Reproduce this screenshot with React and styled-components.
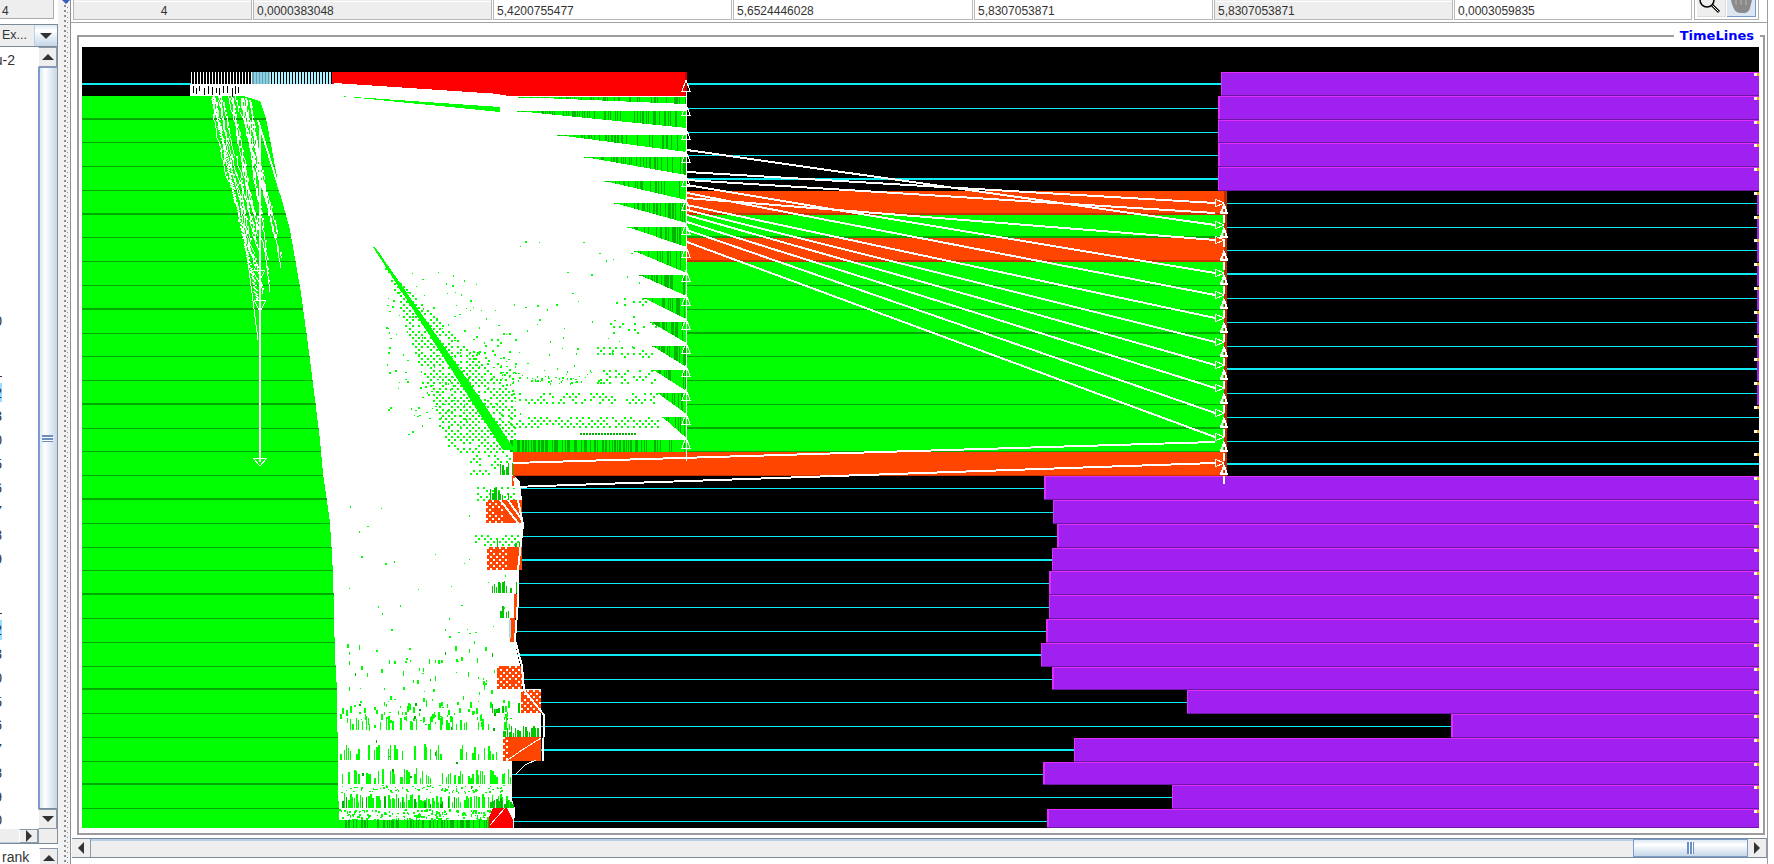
import React from 'react';
import styled, { createGlobalStyle, css } from 'styled-components';

const GlobalStyle = createGlobalStyle`
  html, body {
    margin: 0;
    padding: 0;
    background: #fff;
    overflow: hidden;
  }
  #root {
    width: 1774px;
    height: 864px;
  }
`;

// ---------- chart data ----------

const GREEN = '#00ff00';
const DARK_GREEN = '#00a800';
const ORANGE = '#ff4500';
const PURPLE = '#a020f0';
const CYAN = '#10eaf4';

let seed = 71;
const rnd = () => {
  seed = (seed + 0x6d2b79f5) | 0;
  let t = Math.imul(seed ^ (seed >>> 15), 1 | seed);
  t = (t + Math.imul(t ^ (t >>> 7), 61 | t)) ^ t;
  return ((t ^ (t >>> 14)) >>> 0) / 4294967296;
};

const rowTop = (i) => Math.round(72 + 23.78 * i);
const rowMid = (i) => Math.round(84 + 23.78 * i);
const box = (x, y, w, h) => `M${x} ${y}h${w}v${h}h${-w}z`;

const edge = [
  [205, 96], [243, 96], [260, 101], [266, 118], [272, 150], [280, 193], [290, 230], [301, 293],
  [310, 360], [320, 440], [323, 473], [330, 523], [333, 573], [335, 657], [337, 690], [338, 773], [339, 828],
];
const edgeAt = (y) => {
  for (let i = 1; i < edge.length; i++) {
    if (y <= edge[i][1]) {
      const [x0, y0] = edge[i - 1];
      const [x1, y1] = edge[i];
      return y1 === y0 ? x1 : Math.round(x0 + ((x1 - x0) * (y - y0)) / (y1 - y0));
    }
  }
  return 339;
};

const whiteArea = [
  [190, 84], [332, 84], [513, 96], [687, 96], [687, 452], [513, 452], [513, 475], [520, 482], [522, 500],
  [522, 547], [518, 570], [516, 600], [514, 640], [520, 665], [522, 689], [541, 689], [541, 761], [512, 761],
  [512, 800], [515, 808], [514, 828], [339, 828], [205, 96], [190, 96],
];
const greenArea = [[82, 96], ...edge, [82, 828]];
const pts = (list) => list.map((p) => p.join(',')).join(' ');

const checker = (x0, x1, y0, y1, step, p = 0.85, keep = () => true) => {
  let s = '';
  for (let y = y0, iy = 0; y < y1; y += step, iy++) {
    for (let x = x0, ix = 0; x < x1; x += step, ix++) {
      if ((ix + iy) % 2 === 0 && rnd() < p && keep(x, y)) s += box(x, y, 2, 2);
    }
  }
  return s;
};

const scatter = (n, x0, x1, y0, y1, maxH = 2) => {
  let s = '';
  for (let k = 0; k < n; k++) {
    const x = Math.round(x0 + rnd() * (x1 - x0));
    const y = Math.round(y0 + rnd() * (y1 - y0));
    s += box(x, y, 1 + Math.round(rnd()), 1 + Math.round(rnd() * (maxH - 1)));
  }
  return s;
};

const bars = (x0, x1, y0, y1, p) => {
  let s = '';
  for (let x = x0; x < x1; x += 2) {
    if (rnd() < p) {
      const h = Math.round((y1 - y0) * (0.35 + rnd() * 0.65));
      s += box(x, y1 - h, 1 + Math.round(rnd()), h);
    }
  }
  return s;
};

// [x of the wedge tip, top y, height at the right end]
const wedges = [
  [517, 111, 17], [518, 97, 7], [557, 135, 17], [584, 157, 18], [604, 181, 19], [614, 203, 20], [627, 227, 20],
  [634, 251, 22], [639, 275, 21], [644, 298, 21], [650, 322, 21], [652, 346, 21], [653, 370, 21], [657, 393, 21],
  [662, 417, 21],
];
let wedgeLight = '';
let wedgeDark = '';
wedges.forEach(([x0, top, h]) => {
  for (let x = x0; x < 686; x++) {
    const len = Math.max(1, Math.round(((x - x0) / (686 - x0)) * h));
    if (rnd() < 0.32) wedgeDark += box(x, top, 1, len);
    else wedgeLight += box(x, top, 1, len);
  }
});
for (let x = 510; x < 686; x++) {
  if (rnd() < 0.4) wedgeDark += box(x, 440, 1, 12);
  else wedgeLight += box(x, 440, 1, 12);
}

const diagonalAt = (y) => 373 + (y - 247) * 0.655;

let speckGreen = '';
speckGreen += checker(385, 515, 262, 452, 3, 0.85, (x, y) => {
  const d = diagonalAt(y);
  return x < d && x > d - (y - 262) * 0.3;
});
speckGreen += checker(385, 515, 262, 440, 3, 0.8, (x, y) => {
  const d = diagonalAt(y);
  return x > d && x < d + (y - 262) * 0.34;
});
speckGreen += checker(440, 520, 330, 440, 3, 0.22, (x, y) => x > diagonalAt(y) + (y - 262) * 0.34);
speckGreen += scatter(110, 385, 480, 270, 440);
speckGreen += scatter(60, 430, 520, 350, 420);
speckGreen += checker(510, 660, 417, 429, 3, 0.85);
speckGreen += checker(513, 560, 393, 405, 3, 0.55);
speckGreen += checker(560, 657, 393, 405, 3, 0.6);
speckGreen += scatter(60, 500, 600, 370, 384);
speckGreen += checker(597, 657, 370, 383, 3, 0.55);
speckGreen += checker(597, 657, 347, 358, 3, 0.5);
speckGreen += checker(610, 657, 323, 335, 3, 0.45);
speckGreen += checker(618, 647, 298, 312, 3, 0.25);
speckGreen += scatter(35, 480, 640, 300, 370);
speckGreen += scatter(14, 440, 650, 240, 300);
// lower field, it gets denser towards the bottom
speckGreen += scatter(30, 340, 510, 480, 640);
speckGreen += checker(470, 512, 455, 475, 3, 0.5);
speckGreen += checker(477, 515, 487, 500, 3, 0.65);
speckGreen += checker(475, 520, 535, 547, 3, 0.65);
speckGreen += scatter(60, 340, 510, 640, 700, 5);
speckGreen += scatter(90, 340, 510, 700, 725, 7);
speckGreen += bars(340, 510, 716, 730, 0.3);
speckGreen += bars(340, 510, 744, 760, 0.42);
speckGreen += bars(340, 512, 768, 784, 0.65);
speckGreen += scatter(90, 340, 510, 785, 792, 2);
speckGreen += bars(340, 512, 793, 808, 0.85);
speckGreen += scatter(160, 338, 490, 809, 820, 3);

let speckDark = '';
speckDark += scatter(20, 340, 510, 650, 790, 4);
speckDark += bars(340, 512, 796, 808, 0.2);
for (let x = 580; x < 637; x += 3) speckDark += box(x, 433, 2, 2);

const bottomStripe = (() => {
  let light = '';
  let dark = '';
  for (let x = 339; x < 489; x++) {
    if (rnd() < 0.4) dark += box(x, 820, 1, 8);
    else light += box(x, 820, 1, 8);
  }
  return { light, dark };
})();

const blocks = (() => {
  let dark = '';
  [[488, 515, 797, 808, 0.8], [500, 515, 606, 618, 0.8], [492, 517, 581, 593, 0.65], [503, 538, 725, 737, 0.9],
    [492, 520, 702, 713, 0.55], [490, 512, 487, 500, 0.7], [495, 520, 535, 547, 0.6], [500, 513, 463, 475, 0.7]]
    .forEach(([x0, x1, y0, y1, p]) => {
      dark += bars(x0, x1, y0, y1, p);
    });
  return dark;
})();

// wandering white strands over the green, the states of the first ranks
let bandWhite = '';
for (let k = 0; k < 16; k++) {
  let x = 212 + rnd() * 42;
  const stop = 170 + rnd() * 130;
  const slope = 0.14 + rnd() * 0.12;
  for (let y = 96; y < stop; y += 2) {
    x += slope * 2 + (rnd() - 0.5) * 1.4;
    const px = Math.round(x);
    if (px < edgeAt(y) - 4) bandWhite += box(px, y, rnd() < 0.3 ? 2 : 1, 2);
  }
}
for (let y = 120; y < 193; y++) {
  bandWhite += box(Math.round(257 + (y - 120) * 0.31), y, 2, 1);
}
for (let y = 96; y < 300; y++) {
  bandWhite += box(Math.round(212 + (y - 96) * 0.22 + (rnd() - 0.5) * 3), y, 2, 1);
}

let barcode = '';
let barcodeBlue = '';
for (let x = 191; x < 332; x += 3) {
  const blue = x > 251 && x < 270;
  if (blue) barcodeBlue += box(x, 72, 2, 12);
  else if (x > 270) barcodeBlue += box(x, 72, 1, 12) + box(x + 1, 72, 1, 12);
  else barcode += box(x, 72, 1, 12);
}
let ticks = '';
for (let x = 193; x < 240; x += 3 + Math.round(rnd() * 2)) {
  ticks += box(x, 86 + Math.round(rnd() * 2), 1, 5 + Math.round(rnd() * 4));
}

const orangeHatch = [
  [486, 504, 500, 523], [487, 506, 547, 570], [497, 522, 666, 689], [521, 541, 690, 713], [503, 509, 737, 761],
].map(([x0, x1, y0, y1]) => checker(x0, x1, y0, y1, 3, 0.9)).join('');

// top y at x=687 -> y near x=1215, read off the diagonal arrows
const arrows = [
  [150, 225], [172, 203], [180, 213], [185, 273], [193, 295], [198, 240], [205, 318], [210, 342], [215, 365],
  [222, 388], [230, 413], [242, 437],
];
const rising = [
  [513, 463, 1215, 442],
  [513, 487, 1215, 463],
];
const arrowHeads = [203, 225, 240, 273, 295, 318, 342, 365, 388, 413, 437, 463];

const purpleRows = [
  [0, 1221], [1, 1218], [2, 1218], [3, 1218], [4, 1218], [17, 1044], [18, 1053], [19, 1057], [20, 1052],
  [21, 1049], [22, 1049], [23, 1046], [24, 1041], [25, 1052], [26, 1187], [27, 1451], [28, 1074], [29, 1043],
  [30, 1172], [31, 1047],
];
const orangeRows = [5, 7];
const greenRows = [6, 8, 9, 10, 11, 12, 13, 14, 15];
const allRows = Array.from({ length: 32 }, (_, i) => i);

const TimelineChart = () => (
  <ChartSvg width="1677" height="781" viewBox="82 47 1677 781" shapeRendering="crispEdges">
    <rect x="82" y="47" width="1677" height="781" fill="#000" />
    {allRows.map((i) => (
      <rect key={i} x="82" y={rowMid(i) - (i % 4 === 0 ? 1 : 0)} width="1677" height={i % 4 === 0 ? 2 : 1} fill={CYAN} />
    ))}

    {/* purple states on the right */}
    {purpleRows.map(([i, x]) => {
      const top = rowTop(i);
      const h = Math.min(rowTop(i + 1), 828) - top;
      return (
        <g key={i}>
          <rect x={x} y={top} width={1759 - x} height={h} fill={PURPLE} />
          <rect x={x} y={top} width={1759 - x} height="1" fill="#e02cff" />
          <rect x={x} y={top} width={i % 2 ? 2 : 1} height={h} fill="#e02cff" />
          <rect x={x} y={top + h - 1} width={1759 - x} height="1" fill="#6c18a4" />
          <rect x="1754" y={top + 1} width="3" height="3" fill="#fff" />
          <rect x="1757" y={top + 1} width="2" height="3" fill="#ffa500" />
        </g>
      );
    })}
    {allRows.slice(5, 17).map((i) => (
      <g key={i}>
        {i < 14 && <rect x="1757" y={rowTop(i) + 4} width="2" height="20" fill={PURPLE} />}
        <rect x="1754" y={rowTop(i) + 1} width="3" height="3" fill="#fff" />
        <rect x="1757" y={rowTop(i) + 1} width="2" height="3" fill="#ffa500" />
      </g>
    ))}

    {/* left block */}
    <polygon points={pts(whiteArea)} fill="#fff" />
    <polygon points={pts(greenArea)} fill={GREEN} />
    {allRows.slice(2).map((i) => (
      <rect key={i} x="82" y={rowTop(i) - (i % 4 === 2 ? 2 : 1)} width={edgeAt(rowTop(i)) - 82} height={i % 4 === 2 ? 2 : 1} fill={DARK_GREEN} />
    ))}
    <path d={bandWhite} fill="#fff" />
    <rect x="259" y="127" width="2" height="335" fill="#fff" />
    <path d="M253 458 L260 466 L267 458 Z M254 300 L260 312 L266 300 Z M252 270 L259 282 L265 270 Z" fill="none" stroke="#fff" strokeWidth="1" />
    <polyline points="212,100 240,200 258,340" fill="none" stroke="#fff" strokeWidth="1" />

    {/* barcode on the first row */}
    <rect x="191" y="72" width="141" height="12" fill="#000" />
    <path d={barcode} fill="#fff" />
    <path d={barcodeBlue} fill="#aef2ff" />
    <rect x="252" y="72" width="18" height="12" fill="#7fc8dc" opacity="0.8" />
    <path d={ticks} fill="#000" />

    {/* red first state */}
    <polygon points="332,72 687,72 687,96 513,96 332,84" fill="#ff0000" />
    <polyline points="334,84 500,95" fill="none" stroke="#fff" strokeWidth="2" />
    <polygon points="339,96 500,107 500,112" fill={GREEN} />
    <rect x="685" y="72" width="2" height="24" fill="#c80000" />

    {/* green wedges and speckle */}
    <path d={wedgeLight} fill={GREEN} />
    <path d={wedgeDark} fill="#00b400" />
    <polygon points="373,247 375,247 480,398 515,450 503,450 472,402" fill={GREEN} />
    <path d={speckGreen} fill={GREEN} />
    <path d={speckDark} fill="#00b000" />
    <path d={blocks} fill="#00c800" />
    <path d={bottomStripe.light} fill={GREEN} />
    <path d={bottomStripe.dark} fill="#00b000" />

    {/* middle block, rows 5 to 16 */}
    {greenRows.map((i) => (
      <g key={i}>
        <rect x="687" y={rowTop(i)} width="538" height={rowTop(i + 1) - rowTop(i)} fill={GREEN} />
        <rect x="687" y={rowTop(i + 1) - (i % 4 === 2 ? 2 : 1)} width="538" height={i % 4 === 2 ? 2 : 1} fill={DARK_GREEN} />
      </g>
    ))}
    {orangeRows.map((i) => (
      <g key={i}>
        <rect x="687" y={rowTop(i)} width="538" height={rowTop(i + 1) - rowTop(i)} fill={ORANGE} />
        <rect x="687" y={rowTop(i + 1) - 2} width="538" height="2" fill="#c83200" />
      </g>
    ))}
    <rect x="513" y={rowTop(16)} width="714" height={rowTop(17) - rowTop(16)} fill={ORANGE} />
    <rect x="513" y={rowTop(17) - 1} width="714" height="1" fill="#c83200" />
    <rect x="1224" y="191" width="3" height="285" fill="#b83000" />

    {/* small states at the foot of the white field */}
    <rect x="486" y="500" width="36" height="23" fill={ORANGE} />
    <rect x="487" y="547" width="35" height="23" fill={ORANGE} />
    <rect x="497" y="666" width="25" height="23" fill={ORANGE} />
    <rect x="521" y="690" width="20" height="23" fill={ORANGE} />
    <rect x="503" y="737" width="38" height="24" fill={ORANGE} />
    <rect x="512" y="476" width="3" height="10" fill={ORANGE} />
    <rect x="514" y="594" width="4" height="24" fill={ORANGE} />
    <rect x="510" y="618" width="5" height="24" fill={ORANGE} />
    <rect x="509" y="620" width="2" height="18" fill="#a8dcf0" />
    <path d={orangeHatch} fill="#fff" />
    <polyline points="500,500 518,523" fill="none" stroke="#fff" strokeWidth="2" />
    <polyline points="508,500 522,520" fill="none" stroke="#fff" strokeWidth="2" />
    <polyline points="505,762 522,750 541,738" fill="none" stroke="#fff" strokeWidth="1" />
    <polyline points="515,775 525,765 536,760" fill="none" stroke="#fff" strokeWidth="1" />
    <polygon points="489,828 489,817 493,808 507,808 513,820 513,828" fill="#ff0000" />
    <polyline points="490,825 505,808" fill="none" stroke="#fff" strokeWidth="1" />
    <polyline points="514,478 518,500 523,525 518,570 518,600 515,640 522,666 524,690 544,715 543,761" fill="none" stroke="#fff" strokeWidth="2" />

    {/* message arrows */}
    {arrows.map(([a, b], i) => (
      <line key={i} x1="687" y1={a} x2="1215" y2={b} stroke="#fff" strokeWidth="2" />
    ))}
    {rising.map(([x1, y1, x2, y2], i) => (
      <line key={i} x1={x1} y1={y1} x2={x2} y2={y2} stroke="#fff" strokeWidth="2" />
    ))}
    {arrowHeads.map((y) => (
      <path key={y} d={`M1215 ${y - 4} L1224 ${y} L1215 ${y + 4} Z`} fill="none" stroke="#fff" strokeWidth="1" />
    ))}
    {allRows.slice(5, 17).map((i) => (
      <path key={i} d={`M1224 ${rowTop(i) + 14} L1227 ${rowTop(i) + 22} L1221 ${rowTop(i) + 22} Z M1224 ${rowTop(i) + 24} V${rowTop(i) + 32}`} fill="none" stroke="#fff" strokeWidth="2" />
    ))}
    {allRows.slice(0, 16).map((i) => (
      <path key={i} d={`M686 ${rowTop(i) + 8} L690 ${rowTop(i) + 19} L682 ${rowTop(i) + 19} Z M686 ${rowTop(i) + 19} V${rowTop(i) + 32}`} fill="none" stroke="#fff" strokeWidth="1" />
    ))}
  </ChartSvg>
);

// ---------- swing chrome ----------

const Window = styled.div`
  display: flex;
  width: 1774px;
  height: 864px;
  overflow: hidden;
  background: #fff;
  font-family: "Liberation Sans", Arial, sans-serif;
  color: #333;
`;

const LeftPanel = styled.div`
  display: flex;
  flex-direction: column;
  width: 58px;
  flex: none;
`;

const LeftCell = styled.div`
  height: 19px;
  width: 54px;
  margin-bottom: 5px;
  padding-left: 2px;
  box-sizing: border-box;
  background: #eee;
  border-right: 1px solid #aaa;
  border-bottom: 1px solid #aaa;
  font-size: 12px;
  line-height: 22px;
`;

const Combo = styled.div`
  display: flex;
  height: 23px;
  border-top: 1px solid #7a8a99;
  border-bottom: 1px solid #7a8a99;
  box-sizing: border-box;
`;

const ComboField = styled.div`
  width: 35px;
  box-sizing: border-box;
  border-right: 1px solid #b8cfe5;
  background: #eee;
  font-size: 12.5px;
  line-height: 21px;
  padding-left: 2px;
  overflow: hidden;
  white-space: nowrap;
`;

const ComboButton = styled.div`
  flex: 1;
  display: flex;
  align-items: center;
  justify-content: center;
  border-right: 1px solid #7a8a99;
  background: linear-gradient(#dfe9f3, #fff 25%, #c5d7e8);
`;

const Arrow = styled.span`
  width: 0;
  height: 0;
  ${(p) => p.$dir === 'up' && css`
    border-left: 6px solid transparent;
    border-right: 6px solid transparent;
    border-bottom: 6px solid #333;
  `}
  ${(p) => p.$dir === 'down' && css`
    border-left: 6px solid transparent;
    border-right: 6px solid transparent;
    border-top: 6px solid #333;
  `}
  ${(p) => p.$dir === 'left' && css`
    border-top: 6px solid transparent;
    border-bottom: 6px solid transparent;
    border-right: 6px solid #333;
  `}
  ${(p) => p.$dir === 'right' && css`
    border-top: 6px solid transparent;
    border-bottom: 6px solid transparent;
    border-left: 6px solid #333;
  `}
`;

const ListArea = styled.div`
  display: flex;
  height: 782px;
`;

const ListPane = styled.div`
  width: 38px;
  overflow: hidden;
  padding-top: 1px;
`;

const ListRow = styled.div`
  width: ${(p) => p.$clip}px;
  height: 23.78px;
  display: flex;
  align-items: center;
  justify-content: flex-end;
  overflow: hidden;
  white-space: nowrap;
  font-size: 14px;
  background: ${(p) => (p.$picked ? 'linear-gradient(#fff 10%, #99ddff 10%, #99ddff 90%, #fff 90%)' : 'none')};
`;

const VScroll = styled.div`
  width: 19px;
  display: flex;
  flex-direction: column;
  border-right: 1px solid #8a8f99;
`;

const ScrollButton = styled.div`
  flex: none;
  display: flex;
  align-items: center;
  justify-content: center;
  height: 20px;
  box-sizing: border-box;
  background: #eee;
  border: 1px solid #8a9aab;
  border-left-color: #fff;
`;

const VThumb = styled.div`
  flex: 1;
  display: flex;
  align-items: center;
  justify-content: center;
  border-left: 2px solid #7b9bd0;
  border-top: 1px solid #7b9bd0;
  border-bottom: 1px solid #7a8a99;
  background: linear-gradient(to right, #dde8f3, #fff 30%, #eef3f8 50%, #c5d7e8);
`;

const VGrip = styled.div`
  width: 11px;
  height: 7px;
  margin-left: -2px;
  background: repeating-linear-gradient(to bottom, #6b8fc6 0 2px, #fff 2px 3px);
`;

const SubScroll = styled.div`
  display: flex;
  height: 21px;
  margin-bottom: 4px;
  border-bottom: 1px solid #7a8a99;
  box-sizing: border-box;
`;

const SubTrack = styled.div`
  width: 19px;
  background: #eee;
  border-bottom: 1px solid #b8cfe5;
`;

const SubBtn = styled(ScrollButton)`
  width: 19px;
  height: auto;
`;

const SubCorner = styled.div`
  flex: 1;
  background: #eee;
  border-left: 1px solid #8a9aab;
  border-right: 1px solid #8a8f99;
`;

const RankRow = styled.div`
  display: flex;
  justify-content: space-between;
  height: 20px;
  font-size: 14px;
  line-height: 18px;
  padding-left: 2px;
`;

const RankButton = styled(ScrollButton)`
  width: 19px;
`;

const Splitter = styled.div`
  position: relative;
  width: 13px;
  flex: none;
  box-sizing: border-box;
  border-right: 1px solid #8a8f99;
  background-color: #f2f2f2;
  background-image:
    repeating-linear-gradient(to bottom, #8d8d8d 0 2px, transparent 2px 5px),
    repeating-linear-gradient(to bottom, transparent 0 2px, #8d8d8d 2px 3px, transparent 3px 5px);
  background-size: 2px 100%, 1px 100%;
  background-position: 6px 0, 9px 0;
  background-repeat: no-repeat;
`;

const SplitNub = styled.span`
  position: absolute;
  left: 4px;
  top: 0;
  border-top: 4px solid #3a5fc0;
  border-left: 4px solid transparent;
  border-right: 4px solid transparent;
`;

const RightPanel = styled.div`
  display: flex;
  flex-direction: column;
  width: 1697px;
  flex: none;
  box-sizing: border-box;
  border-right: 1px solid #9b9b9b;
`;

const InfoBar = styled.div`
  display: flex;
  align-items: flex-start;
  height: 23px;
  flex: none;
  box-sizing: border-box;
  padding-left: 2px;
  border-bottom: 1px solid #a0a0a0;
`;

const InfoCell = styled.div`
  width: ${(p) => p.$w}px;
  height: 20px;
  flex: none;
  box-sizing: border-box;
  margin-right: 1px;
  padding: 4px 0 0 3px;
  background: ${(p) => (p.$gray ? 'linear-gradient(#eee 1px, #fff 1px, #fff 2px, #eee 2px)' : '#fff')};
  border: 1px solid #b8b8b8;
  border-top: none;
  font-size: 12px;
  line-height: 15px;
  text-align: ${(p) => (p.$center ? 'center' : 'left')};
`;

const ToolGroup = styled.div`
  display: flex;
  gap: 1px;
  height: 20px;
  margin-left: 1px;
  padding: 0 2px;
  box-sizing: border-box;
  border: 1px solid #b0b0b0;
  border-top: none;
`;

const ToolButton = styled.div`
  width: 29px;
  height: 17px;
  overflow: hidden;
  box-sizing: border-box;
  background: ${(p) => (p.$pressed ? '#dbe6f1' : '#eee')};
  border-right: 1px solid ${(p) => (p.$pressed ? '#7b9bd0' : '#ddd')};
  border-bottom: 1px solid ${(p) => (p.$pressed ? '#7b9bd0' : '#ddd')};
`;

const TimelineBox = styled.div`
  position: relative;
  height: 800px;
  flex: none;
  margin: 12px 2px 0 6px;
  padding: 10px 0 0 3px;
  box-sizing: border-box;
  border: 2px solid #9c9c9c;
`;

const BoxTitle = styled.span`
  position: absolute;
  top: -10px;
  right: 3px;
  padding: 0 6px;
  background: #fff;
  color: #0000ff;
  font-family: "DejaVu Sans", sans-serif;
  font-size: 13px;
  font-weight: bold;
  line-height: 18px;
`;

const ChartSvg = styled.svg`
  display: block;
`;

const HScroll = styled.div`
  display: flex;
  height: 20px;
  flex: none;
  margin: 3px 0 0 1px;
  box-sizing: border-box;
  border-top: 1px solid #7a8a99;
  border-bottom: 1px solid #7a8a99;
`;

const HButton = styled(ScrollButton)`
  width: 19px;
  height: 100%;
  border-width: 0 1px 0 0;
`;

const HTrack = styled.div`
  flex: 1;
  background: #eee;
  border-top: 2px solid #b8cfe5;
`;

const HThumb = styled.div`
  width: 115px;
  display: flex;
  align-items: center;
  justify-content: center;
  box-sizing: border-box;
  border: 1px solid #7b9bd0;
  background: linear-gradient(#dde8f3, #fff 30%, #eef3f8 50%, #c5d7e8);
`;

const HGrip = styled.div`
  width: 7px;
  height: 12px;
  background: repeating-linear-gradient(to right, #6b8fc6 0 2px, #fff 2px 3px);
`;

const values = [
  { w: 179, text: '4', gray: true, center: true },
  { w: 239, text: '0,0000383048', gray: true },
  { w: 239, text: '5,4200755477' },
  { w: 240, text: '5,6524446028' },
  { w: 239, text: '5,8307053871' },
  { w: 239, text: '5,8307053871', gray: true },
  { w: 238, text: '0,0003059835' },
];

// the tree is scrolled away, only the last glyph of each label still shows
const ranks = [
  'cpu-2', null, null, null, null, null, null, null, null, null, null,
  'rank 10', null, 'rank 1_', 'rank 12', 'rank 13', 'rank 10', 'rank 15', 'rank 16', 'rank 7', 'rank 18', 'rank 19', null,
  'rank 1_', 'rank 22', 'rank 23', 'rank 10', 'rank 25', 'rank 26', 'rank 7', 'rank 28', 'rank 29', 'rank 30',
];

export default function App() {
  return (
    <Window>
      <GlobalStyle />
      <LeftPanel>
        <LeftCell>4</LeftCell>
        <Combo>
          <ComboField>Ex...</ComboField>
          <ComboButton>
            <Arrow $dir="down" />
          </ComboButton>
        </Combo>
        <ListArea>
          <ListPane>
            {ranks.map((r, i) => (
              <ListRow key={i} $clip={i === 0 ? 15 : 2} $picked={i === 14 || i === 24}>
                {r}
              </ListRow>
            ))}
          </ListPane>
          <VScroll>
            <ScrollButton>
              <Arrow $dir="up" />
            </ScrollButton>
            <VThumb>
              <VGrip />
            </VThumb>
            <ScrollButton>
              <Arrow $dir="down" />
            </ScrollButton>
          </VScroll>
        </ListArea>
        <SubScroll>
          <SubTrack />
          <SubBtn>
            <Arrow $dir="right" />
          </SubBtn>
          <SubCorner />
        </SubScroll>
        <RankRow>
          <span>rank</span>
          <RankButton>
            <Arrow $dir="up" />
          </RankButton>
        </RankRow>
      </LeftPanel>

      <Splitter>
        <SplitNub />
      </Splitter>

      <RightPanel>
        <InfoBar>
          {values.map((v, i) => (
            <InfoCell key={i} $w={v.w} $gray={v.gray} $center={v.center}>
              {v.text}
            </InfoCell>
          ))}
          <ToolGroup>
            <ToolButton>
              <svg width="28" height="16" viewBox="0 0 28 16">
                <circle cx="10" cy="0" r="7" fill="none" stroke="#000" strokeWidth="1.5" />
                <path d="M15 5 L22 12" stroke="#000" strokeWidth="3" />
                <path d="M15.5 5.5 L21.5 11.5" stroke="#fff" strokeWidth="1" />
              </svg>
            </ToolButton>
            <ToolButton $pressed>
              <svg width="28" height="16" viewBox="0 0 28 16">
                <path d="M4 0 L5 4 L7 9 Q9 13 14 13 L18 13 Q22 12 23 8 L25 0 Z" fill="#8a8a8a" />
                <path d="M9 0 V5 M14 0 V5 M19 0 V5" stroke="#b5b5b5" strokeWidth="1" />
              </svg>
            </ToolButton>
          </ToolGroup>
        </InfoBar>

        <TimelineBox>
          <BoxTitle>TimeLines</BoxTitle>
          <TimelineChart />
        </TimelineBox>

        <HScroll>
          <HButton>
            <Arrow $dir="left" />
          </HButton>
          <HTrack />
          <HThumb>
            <HGrip />
          </HThumb>
          <HButton>
            <Arrow $dir="right" />
          </HButton>
        </HScroll>
      </RightPanel>
    </Window>
  );
}
